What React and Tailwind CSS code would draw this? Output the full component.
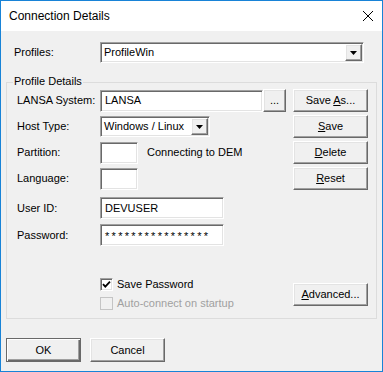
const sunken =
  "border border-t-[#a0a0a0] border-l-[#a0a0a0] border-r-white border-b-white shadow-[inset_1px_1px_0_#696969,inset_-1px_-1px_0_#e3e3e3]";
const raised =
  "border border-t-white border-l-white border-r-[#696969] border-b-[#696969] shadow-[inset_-1px_-1px_0_#a0a0a0,inset_1px_1px_0_#e3e3e3] bg-[#f0f0f0]";

const Arrow = () => (
  <svg width="7" height="4" viewBox="0 0 7 4">
    <path d="M0 0H7L3.5 4Z" fill="#000" />
  </svg>
);

const Combo = ({ value, className }) => (
  <div className={`${sunken} bg-white p-[1px] flex items-stretch ${className}`}>
    <div className="flex-1 flex items-center pl-[2px] truncate">{value}</div>
    <div className={`${raised} w-[17px] flex items-center justify-center`}>
      <Arrow />
    </div>
  </div>
);

const TextBox = ({ value, className = "" }) => (
  <div className={`${sunken} bg-white h-[22px] flex items-center pl-[4px] ${className}`}>{value}</div>
);

const Button = ({ children, className = "" }) => (
  <button className={`${raised} h-[23px] w-[75px] flex items-center justify-center ${className}`}>
    <span>{children}</span>
  </button>
);

const Label = ({ children }) => <div className="w-[83px] shrink-0">{children}</div>;

const CheckBox = ({ checked, disabled }) => (
  <div
    className={`w-[13px] h-[13px] flex items-center justify-center ${
      disabled ? "border border-[#c4c4c4] bg-[#f0f0f0]" : `${sunken} bg-white`
    }`}
  >
    {checked && (
      <svg width="9" height="9" viewBox="0 0 9 9">
        <path d="M1 4.2L3.3 6.6L8 1.6" stroke="#000" strokeWidth="1.8" fill="none" />
      </svg>
    )}
  </div>
);

export default function App() {
  return (
    <div className="w-[383px] h-[372px] border border-[#1883d7] bg-[#f0f0f0] flex flex-col text-[11px] text-black font-['Liberation_Sans',Arial,sans-serif]">
      {/* title bar */}
      <div className="h-[30px] bg-white flex items-center justify-between pl-[8px] pr-[9px] text-[12px]">
        <span>Connection Details</span>
        <svg width="10" height="10" viewBox="0 0 10 10">
          <path d="M0 0L10 10M10 0L0 10" stroke="#000" strokeWidth="1" />
        </svg>
      </div>

      <div className="flex-1 flex flex-col px-[5px]">
        <div className="mt-[11px] h-[21px] flex items-center pl-[8px]">
          <div className="w-[86px]">Profiles:</div>
          <Combo value="ProfileWin" className="w-[264px] h-[21px]" />
        </div>

        {/* Profile Details group */}
        <div className="mt-[19px] w-[371px] h-[237px] border border-[#dcdcdc] flex flex-col">
          <div className="-mt-[8px] ml-[6px] px-[1px] self-start bg-[#f0f0f0] h-[13px] leading-[13px]">
            Profile Details
          </div>

          <div className="flex flex-col pl-[10px] pr-[8px]">
            <div className="mt-[1px] h-[23px] flex items-center">
              <Label>LANSA System:</Label>
              <TextBox value="LANSA" className="w-[163px]" />
              <button className={`${raised} w-[23px] h-[23px] flex items-center justify-center`}>...</button>
              <Button className="ml-auto">
                Save <u>A</u>s...
              </Button>
            </div>

            <div className="mt-[3px] h-[23px] flex items-center">
              <Label>Host Type:</Label>
              <Combo value="Windows / Linux" className="w-[110px] h-[21px]" />
              <Button className="ml-auto">
                <u>S</u>ave
              </Button>
            </div>

            <div className="mt-[3px] h-[23px] flex items-center">
              <Label>Partition:</Label>
              <TextBox className="w-[38px]" />
              <span className="ml-[9px]">Connecting to DEM</span>
              <Button className="ml-auto">
                <u>D</u>elete
              </Button>
            </div>

            <div className="mt-[3px] h-[23px] flex items-center">
              <Label>Language:</Label>
              <TextBox className="w-[38px]" />
              <Button className="ml-auto">
                <u>R</u>eset
              </Button>
            </div>

            <div className="mt-[7px] h-[22px] flex items-center">
              <Label>User ID:</Label>
              <TextBox value="DEVUSER" className="w-[124px]" />
            </div>

            <div className="mt-[5px] h-[22px] flex items-center">
              <Label>Password:</Label>
              <TextBox value="****************" className="w-[124px] tracking-[2.3px] items-start pt-[3px]" />
            </div>

            <div className="flex">
              <div className="ml-[83px] mt-[32px] flex flex-col">
                <div className="h-[13px] flex items-center gap-[4px]">
                  <CheckBox checked />
                  <span>Save Password</span>
                </div>
                <div className="mt-[6px] h-[13px] flex items-center gap-[4px] text-[#a0a0a0]">
                  <CheckBox disabled />
                  <span>Auto-connect on startup</span>
                </div>
              </div>
              <Button className="ml-auto mt-[37px]">
                <u>A</u>dvanced...
              </Button>
            </div>
          </div>
        </div>

        <div className="mt-[19px] flex gap-[9px]">
          <button className="w-[75px] h-[24px] border border-[#696969] bg-[#f0f0f0] shadow-[inset_1px_1px_0_#fff,inset_-1px_-1px_0_#696969,inset_-2px_-2px_0_#a0a0a0]">
            OK
          </button>
          <button className={`${raised} w-[75px] h-[24px]`}>Cancel</button>
        </div>
      </div>
    </div>
  );
}
